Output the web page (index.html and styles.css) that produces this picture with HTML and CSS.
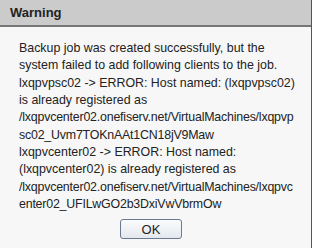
FILE: index.html
```html
<!DOCTYPE html>
<html lang="en">
<head>
    <meta charset="UTF-8">
    <title>Warning</title>
    <link rel="stylesheet" href="styles.css">
</head>
<body>
    <div class="dialog">
        <div class="title-bar">Warning</div>
        <div class="content">
            <p class="message">Backup job was created successfully, but the system failed to add following clients to the job.<br>lxqpvpsc02 -&gt; ERROR: Host named: (lxqpvpsc02) is already registered as <span class="path">/lxqpvcenter02.onefiserv.net/VirtualMachines/lxqpvpsc02_Uvm7TOKnAAt1CN18jV9Maw</span><br>lxqpvcenter02 -&gt; ERROR: Host named: (lxqpvcenter02) is already registered as <span class="path">/lxqpvcenter02.onefiserv.net/VirtualMachines/lxqpvcenter02_UFILwGO2b3DxiVwVbrmOw</span></p>
            <div class="actions">
                <button class="btn">OK</button>
            </div>
        </div>
    </div>
</body>
</html>
```

FILE: styles.css
```css
body {
    margin: 0;
    font-family: "Liberation Sans", Arial, sans-serif;
    background: #f7f7f7;
}
.dialog {
    width: 311px;
    height: 248px;
    border-right: 1px solid #555;
    background: #f7f7f7;
}
.title-bar {
    height: 25px;
    line-height: 26px;
    padding-left: 10px;
    background: #cbcbcb;
    border-bottom: 2px solid #777;
    font-size: 13px;
    font-weight: bold;
    color: #222;
}
.content {
    padding: 13px 0 0 19px;
}
.message {
    margin: 0;
    width: 278px;
    font-size: 12.4px;
    line-height: 17.35px;
    color: #222;
    overflow-wrap: break-word;
}
.path {
    letter-spacing: -0.2px;
}
.actions {
    display: flex;
    justify-content: center;
    padding: 6px 28px 0 0;
}
.btn {
    width: 62px;
    height: 20px;
    padding: 0;
    font-family: "Liberation Sans", Arial, sans-serif;
    font-size: 13px;
    color: #222;
    background: linear-gradient(#fafbfc, #e4e8ee);
    border: 1px solid #6a7a90;
    border-radius: 3px;
}
```
